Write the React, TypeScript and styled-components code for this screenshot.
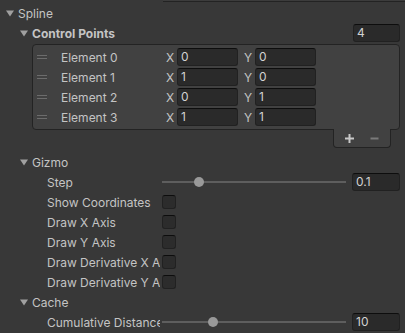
import React from "react";
import styled, { createGlobalStyle } from "styled-components";

const GlobalStyle = createGlobalStyle`
  html, body {
    margin: 0;
    padding: 0;
    background: #383838;
  }
`;

const Inspector = styled.div`
  width: 405px;
  height: 333px;
  overflow: hidden;
  box-sizing: border-box;
  padding-right: 5px;
  background: #383838;
  display: flex;
  flex-direction: column;
  font-family: Inter, "Noto Sans", sans-serif;
  font-size: 12px;
  color: #c4c4c4;
`;

const TopStub = styled.div`
  margin-left: 163px;
  margin-right: -5px;
  height: 1px;
  background: #3c3c3c;
  border-bottom: 1px solid #232323;
`;

const Row = styled.div<{ $indent: number; $space?: number }>`
  height: 18px;
  margin-top: ${({ $space }) => $space ?? 2}px;
  padding-left: ${({ $indent }) => $indent}px;
  display: flex;
  align-items: center;
  flex-shrink: 0;
`;

const Arrow = styled.svg`
  width: 8px;
  height: 7px;
  margin-right: 4px;
  flex-shrink: 0;
`;

const Title = styled.span<{ $bold?: boolean }>`
  flex: 1;
  font-weight: ${({ $bold }) => ($bold ? 700 : 400)};
  white-space: nowrap;
`;

const Field = styled.div<{ $width: number }>`
  width: ${({ $width }) => $width}px;
  height: 18px;
  box-sizing: border-box;
  flex-shrink: 0;
  padding-left: 3px;
  background: #2a2a2a;
  border: 1px solid #212121;
  border-top-color: #0d0d0d;
  border-radius: 3px;
  color: #d2d2d2;
  line-height: 16px;
`;

const ListBox = styled.div`
  margin-left: 32px;
  margin-top: 2px;
  padding: 3px 0;
  background: #414141;
  border: 1px solid #232323;
  border-radius: 4px;
  display: flex;
  flex-direction: column;
  gap: 2px;
`;

const ElementRow = styled.div`
  height: 18px;
  display: flex;
  align-items: center;
`;

const Handle = styled.div`
  width: 10px;
  height: 4px;
  margin-left: 4px;
  border-top: 1px solid #6c6c6c;
  border-bottom: 1px solid #6c6c6c;
  box-sizing: border-box;
  flex-shrink: 0;
`;

const ElementLabel = styled.span`
  width: 104px;
  margin-left: 14px;
  white-space: nowrap;
`;

const AxisLabel = styled.span<{ $space?: number }>`
  width: 12px;
  margin-left: ${({ $space }) => $space ?? 0}px;
  padding-left: 1px;
  box-sizing: border-box;
  color: #c4c4c4;
`;

const ListFooter = styled.div`
  align-self: flex-end;
  margin-right: 9px;
  margin-top: -1px;
  width: 58px;
  height: 19px;
  box-sizing: border-box;
  padding: 0 3px;
  background: #414141;
  border: 1px solid #232323;
  border-top: none;
  border-radius: 0 0 4px 4px;
  display: flex;
  align-items: center;
`;

const FooterButton = styled.div`
  width: 25px;
  height: 18px;
  display: flex;
  align-items: center;
  justify-content: center;
`;

const PropLabel = styled.span`
  width: 113px;
  margin-right: 2px;
  overflow: hidden;
  white-space: nowrap;
  flex-shrink: 0;
`;

const SliderTrack = styled.div`
  flex: 1;
  height: 18px;
  position: relative;
  margin-right: 6px;

  &::before {
    content: "";
    position: absolute;
    left: 0;
    right: 0;
    top: 8px;
    height: 2px;
    background: #5e5e5e;
  }
`;

const Thumb = styled.div`
  position: absolute;
  top: 4px;
  width: 10px;
  height: 10px;
  border-radius: 50%;
  background: #999999;
`;

const Checkbox = styled.div`
  width: 14px;
  height: 14px;
  box-sizing: border-box;
  background: #2c2c2c;
  border: 1px solid #212121;
  border-top-color: #0d0d0d;
  border-radius: 3px;
`;

const TRACK = 184;
const THUMB = 10;

const FoldArrow = () => (
  <Arrow viewBox="0 0 8 7">
    <path d="M0 0.5 L8 0.5 L4 6.5 Z" fill="#a0a0a0" />
  </Arrow>
);

const Foldout = ({
  indent,
  title,
  bold,
  space,
  children,
}: {
  indent: number;
  title: string;
  bold?: boolean;
  space?: number;
  children?: React.ReactNode;
}) => (
  <Row $indent={indent} $space={space}>
    <FoldArrow />
    <Title $bold={bold}>{title}</Title>
    {children}
  </Row>
);

const SliderRow = ({
  label,
  value,
  min,
  max,
}: {
  label: string;
  value: number;
  min: number;
  max: number;
}) => {
  const left = ((value - min) / (max - min)) * (TRACK - THUMB);
  return (
    <Row $indent={47}>
      <PropLabel>{label}</PropLabel>
      <SliderTrack>
        <Thumb style={{ left }} />
      </SliderTrack>
      <Field $width={48}>{value}</Field>
    </Row>
  );
};

const ToggleRow = ({ label }: { label: string }) => (
  <Row $indent={47}>
    <PropLabel>{label}</PropLabel>
    <Checkbox />
  </Row>
);

const points = [
  { x: 0, y: 0 },
  { x: 1, y: 0 },
  { x: 0, y: 1 },
  { x: 1, y: 1 },
];

export default function App() {
  return (
    <>
      <GlobalStyle />
      <Inspector>
        <TopStub />
        <Foldout indent={6} title="Spline" />
        <Foldout indent={20} title="Control Points" bold>
          <Field $width={47}>{points.length}</Field>
        </Foldout>
        <ListBox>
          {points.map((p, i) => (
            <ElementRow key={i}>
              <Handle />
              <ElementLabel>Element {i}</ElementLabel>
              <AxisLabel>X</AxisLabel>
              <Field $width={61}>{p.x}</Field>
              <AxisLabel $space={5}>Y</AxisLabel>
              <Field $width={61}>{p.y}</Field>
            </ElementRow>
          ))}
        </ListBox>
        <ListFooter>
          <FooterButton>
            <svg width="11" height="11" viewBox="0 0 11 11">
              <path d="M5.5 1 V10 M1 5.5 H10" stroke="#c8c8c8" strokeWidth="2" />
            </svg>
          </FooterButton>
          <FooterButton>
            <svg width="11" height="11" viewBox="0 0 11 11">
              <path d="M1.5 5.5 H9.5" stroke="#7a7a7a" strokeWidth="2" />
            </svg>
          </FooterButton>
        </ListFooter>
        <Foldout indent={20} title="Gizmo" space={5} />
        <SliderRow label="Step" value={0.1} min={0.01} max={0.5} />
        <ToggleRow label="Show Coordinates" />
        <ToggleRow label="Draw X Axis" />
        <ToggleRow label="Draw Y Axis" />
        <ToggleRow label="Draw Derivative X Axis" />
        <ToggleRow label="Draw Derivative Y Axis" />
        <Foldout indent={20} title="Cache" />
        <SliderRow label="Cumulative Distance" value={10} min={1} max={35} />
      </Inspector>
    </>
  );
}
